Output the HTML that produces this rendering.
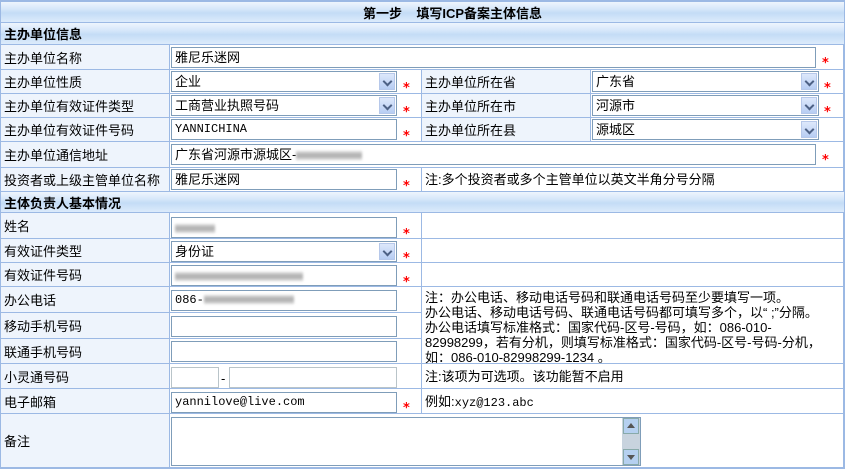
<!DOCTYPE html>
<html><head><meta charset="utf-8">
<style>
*{box-sizing:border-box;margin:0;padding:0}
body{width:845px;height:469px;background:#fff;position:relative;overflow:hidden;font:13px "Liberation Sans","WenQuanYi Zen Hei","Noto Sans CJK SC",sans-serif;color:#000}
.c{position:absolute;border-right:1px solid #9cb9e4;border-bottom:1px solid #9cb9e4;background:#fff}
.l{background:#eef4fc;padding-left:3px;display:flex;align-items:center;font-size:13px}
.h{position:absolute;left:1px;width:843px;background:linear-gradient(#eef5fd 0%,#d6e7fa 35%,#c4dcf6 55%,#dcebfb 100%);border-bottom:1px solid #9cb9e4;font-weight:bold;display:flex;align-items:center;font-size:13px}
.i{position:absolute;height:21px;border:1px solid #7f9db9;background:#fff;padding-left:3px;line-height:19px;font-size:13px;white-space:nowrap;overflow:hidden}
.m{font-family:"Liberation Mono","WenQuanYi Zen Hei",monospace;font-size:12px}
.s{position:absolute;color:#f00;font-size:13px;line-height:12px;font-weight:bold;font-family:"DejaVu Sans",sans-serif}
.ar{position:absolute;right:1px;top:1px;width:16px;height:17px;background:linear-gradient(#dde8fb,#b7cdf3);border:1px solid #b6c8ea}
.ar:after{content:"";position:absolute;left:4px;top:4px;width:5px;height:5px;border-right:2px solid #4d6185;border-bottom:2px solid #4d6185;transform:rotate(45deg)}
.bl{display:inline-block;height:9px;background:linear-gradient(#ddd,#aaa,#ddd);filter:blur(1.2px);vertical-align:middle}
.n{position:absolute;padding-left:3px;font-size:13px;line-height:13px;white-space:nowrap}
</style></head><body>
<div style="position:absolute;left:0;top:0;width:845px;height:469px;border:1px solid #9cb9e4;border-top:2px solid #9cb9e4"></div>
<div class="h" style="top:2px;height:21px;justify-content:center;padding-left:60px">第一步&nbsp;&nbsp;&nbsp;&nbsp;填写ICP备案主体信息</div>
<div class="h" style="top:23px;height:22px;padding-left:3px">主办单位信息</div>

<div class="c l" style="left:1px;top:45px;width:169px;height:25px">主办单位名称</div>
<div class="c" style="left:170px;top:45px;width:674px;height:25px"></div>

<div class="c l" style="left:1px;top:70px;width:169px;height:24px">主办单位性质</div>
<div class="c" style="left:170px;top:70px;width:252px;height:24px"></div>
<div class="c l" style="left:422px;top:70px;width:169px;height:24px">主办单位所在省</div>
<div class="c" style="left:591px;top:70px;width:253px;height:24px"></div>

<div class="c l" style="left:1px;top:94px;width:169px;height:24px">主办单位有效证件类型</div>
<div class="c" style="left:170px;top:94px;width:252px;height:24px"></div>
<div class="c l" style="left:422px;top:94px;width:169px;height:24px">主办单位所在市</div>
<div class="c" style="left:591px;top:94px;width:253px;height:24px"></div>

<div class="c l" style="left:1px;top:118px;width:169px;height:24px">主办单位有效证件号码</div>
<div class="c" style="left:170px;top:118px;width:252px;height:24px"></div>
<div class="c l" style="left:422px;top:118px;width:169px;height:24px">主办单位所在县</div>
<div class="c" style="left:591px;top:118px;width:253px;height:24px"></div>

<div class="c l" style="left:1px;top:142px;width:169px;height:26px">主办单位通信地址</div>
<div class="c" style="left:170px;top:142px;width:674px;height:26px"></div>

<div class="c l" style="left:1px;top:168px;width:169px;height:24px">投资者或上级主管单位名称</div>
<div class="c" style="left:170px;top:168px;width:252px;height:24px"></div>
<div class="c" style="left:422px;top:168px;width:422px;height:24px"></div>
<div class="n" style="left:422px;top:173px">注:多个投资者或多个主管单位以英文半角分号分隔</div>

<div class="h" style="top:192px;height:21px;padding-left:3px">主体负责人基本情况</div>

<div class="c l" style="left:1px;top:213px;width:169px;height:26px">姓名</div>
<div class="c" style="left:170px;top:213px;width:252px;height:26px"></div>
<div class="c" style="left:422px;top:213px;width:422px;height:26px"></div>
<div class="c l" style="left:1px;top:239px;width:169px;height:24px">有效证件类型</div>
<div class="c" style="left:170px;top:239px;width:252px;height:24px"></div>
<div class="c" style="left:422px;top:239px;width:422px;height:24px"></div>
<div class="c l" style="left:1px;top:263px;width:169px;height:24px">有效证件号码</div>
<div class="c" style="left:170px;top:263px;width:252px;height:24px"></div>
<div class="c" style="left:422px;top:263px;width:422px;height:24px"></div>

<div class="c l" style="left:1px;top:287px;width:169px;height:26px">办公电话</div>
<div class="c" style="left:170px;top:287px;width:252px;height:26px"></div>
<div class="c l" style="left:1px;top:313px;width:169px;height:26px">移动手机号码</div>
<div class="c" style="left:170px;top:313px;width:252px;height:26px"></div>
<div class="c l" style="left:1px;top:339px;width:169px;height:25px">联通手机号码</div>
<div class="c" style="left:170px;top:339px;width:252px;height:25px"></div>
<div class="c" style="left:422px;top:287px;width:422px;height:77px"></div>
<div class="n" style="left:422px;top:290px;line-height:15px">注：办公电话、移动电话号码和联通电话号码至少要填写一项。<br>办公电话、移动电话号码、联通电话号码都可填写多个，以“ ;”分隔。<br>办公电话填写标准格式：国家代码-区号-号码，如：086-010-<br>82998299，若有分机，则填写标准格式：国家代码-区号-号码-分机，<br>如：086-010-82998299-1234 。</div>

<div class="c l" style="left:1px;top:364px;width:169px;height:25px">小灵通号码</div>
<div class="c" style="left:170px;top:364px;width:252px;height:25px"></div>
<div class="c" style="left:422px;top:364px;width:422px;height:25px"></div>
<div class="n" style="left:422px;top:370px">注:该项为可选项。该功能暂不启用</div>

<div class="c l" style="left:1px;top:389px;width:169px;height:25px">电子邮箱</div>
<div class="c" style="left:170px;top:389px;width:252px;height:25px"></div>
<div class="c" style="left:422px;top:389px;width:422px;height:25px"></div>
<div class="n" style="left:422px;top:395px">例如:<span class="m">xyz@123.abc</span></div>

<div class="c l" style="left:1px;top:414px;width:169px;height:54px">备注</div>
<div class="c" style="left:170px;top:414px;width:674px;height:54px"></div>

<div class="i" style="left:171px;top:47px;width:645px">雅尼乐迷网</div><div class="s" style="left:822px;top:58px">*</div>
<div class="i" style="left:171px;top:71px;width:226px">企业<span class="ar"></span></div><div class="s" style="left:403px;top:83px">*</div>
<div class="i" style="left:592px;top:71px;width:227px">广东省<span class="ar"></span></div><div class="s" style="left:824px;top:83px">*</div>
<div class="i" style="left:171px;top:95px;width:226px">工商营业执照号码<span class="ar"></span></div><div class="s" style="left:403px;top:107px">*</div>
<div class="i" style="left:592px;top:95px;width:227px">河源市<span class="ar"></span></div><div class="s" style="left:824px;top:107px">*</div>
<div class="i m" style="left:171px;top:119px;width:226px">YANNICHINA</div><div class="s" style="left:403px;top:131px">*</div>
<div class="i" style="left:592px;top:119px;width:227px">源城区<span class="ar"></span></div>
<div class="i" style="left:171px;top:144px;width:645px">广东省河源市源城区-<span class="bl" style="width:66px"></span></div><div class="s" style="left:822px;top:155px">*</div>
<div class="i" style="left:171px;top:169px;width:226px">雅尼乐迷网</div><div class="s" style="left:403px;top:181px">*</div>

<div class="i" style="left:171px;top:217px;width:226px"><span class="bl" style="width:40px"></span></div><div class="s" style="left:403px;top:229px">*</div>
<div class="i" style="left:171px;top:241px;width:226px">身份证<span class="ar"></span></div><div class="s" style="left:403px;top:253px">*</div>
<div class="i" style="left:171px;top:265px;width:226px"><span class="bl" style="width:128px"></span></div><div class="s" style="left:403px;top:277px">*</div>
<div class="i m" style="left:171px;top:290px;width:226px">086-<span class="bl" style="width:90px"></span></div>
<div class="i" style="left:171px;top:316px;width:226px"></div>
<div class="i" style="left:171px;top:341px;width:226px"></div>
<div class="i" style="left:171px;top:367px;width:48px;border-color:#b9c4c9"></div>
<div style="position:absolute;left:221px;top:371px">-</div>
<div class="i" style="left:229px;top:367px;width:168px;border-color:#b9c4c9"></div>
<div class="i m" style="left:171px;top:392px;width:226px">yannilove@live.com</div><div class="s" style="left:403px;top:403px">*</div>
<div class="i" style="left:171px;top:417px;width:470px;height:49px"></div>
<div style="position:absolute;left:622px;top:418px;width:18px;height:47px;background:#c8d3de">
 <div style="position:absolute;left:1px;top:0;width:16px;height:16px;background:#b5d0f0;border:1px solid #8aa;"><div style="position:absolute;left:3px;top:4px;border:4px solid transparent;border-bottom:5px solid #555;border-top:0"></div></div>
 <div style="position:absolute;left:1px;bottom:0;width:16px;height:16px;background:#b5d0f0;border:1px solid #8aa;"><div style="position:absolute;left:3px;top:5px;border:4px solid transparent;border-top:5px solid #555;border-bottom:0"></div></div>
</div>
</body></html>
